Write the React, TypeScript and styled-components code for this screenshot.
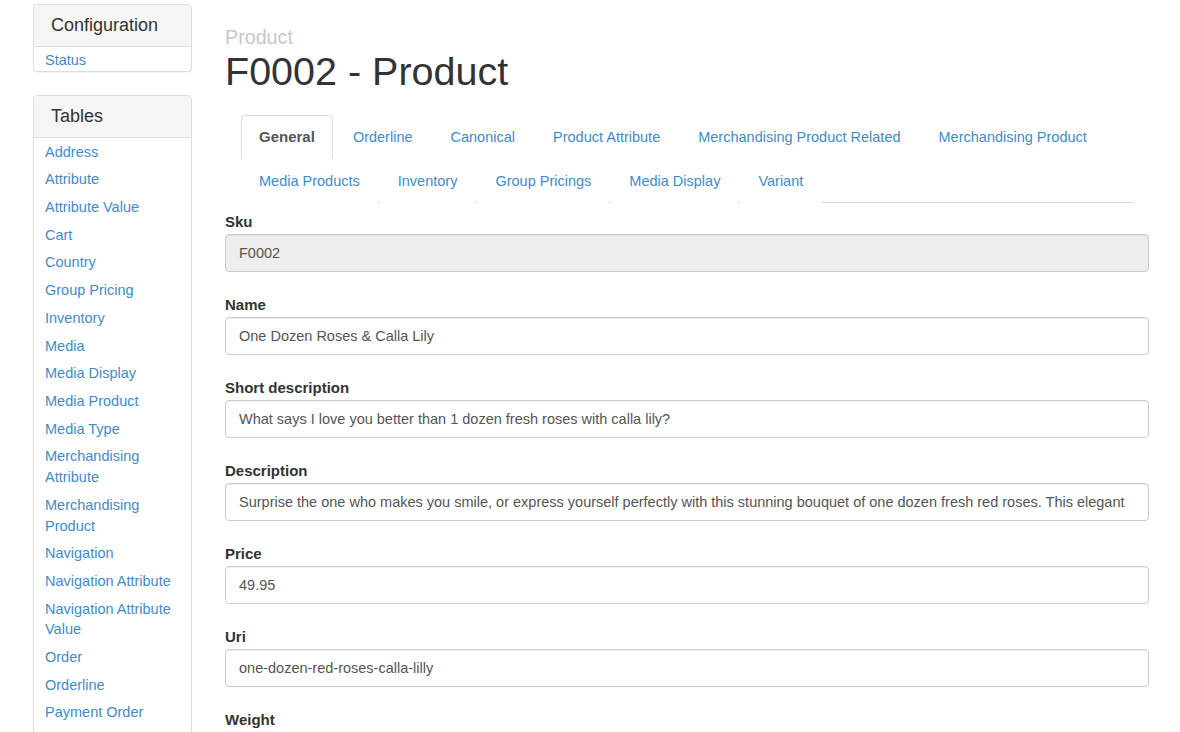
import React from "react";
import styled, { createGlobalStyle } from "styled-components";

const Global = createGlobalStyle`
  html, body { margin: 0; padding: 0; background: #fff; }
  body {
    font-family: "Liberation Sans", Arial, Helvetica, sans-serif;
    font-size: 14.5px;
    line-height: 20.7px;
    color: #333;
  }
  * { box-sizing: border-box; }
`;

const Page = styled.div`
  display: flex;
  align-items: flex-start;
  gap: 33px;
  padding-left: 33px;
  height: 732px;
  overflow: hidden;
`;

const Sidebar = styled.aside`
  width: 159px;
  flex: none;
  min-height: 780px;
  padding-top: 4px;
  display: flex;
  flex-direction: column;
  gap: 23px;
`;

const Panel = styled.div<{ $grow?: boolean }>`
  border: 1px solid #ddd;
  border-radius: 4px;
  background: #fff;
  box-shadow: 0 1px 1px rgba(0, 0, 0, 0.05);
  flex: ${(p) => (p.$grow ? "1 0 auto" : "none")};
`;

const PanelHeading = styled.div`
  background: #f5f5f5;
  border-bottom: 1px solid #ddd;
  border-radius: 3px 3px 0 0;
  padding: 10.6px 17px;
  font-size: 18px;
  line-height: 19.8px;
  color: #333;
`;

const LinkList = styled.ul`
  list-style: none;
  margin: 0 0 -3.5px;
  padding: 0;
`;

const LinkItem = styled.li`
  padding: 3.5px 15px 3.5px 11px;
  line-height: 20.7px;
`;

const Link = styled.a`
  color: #428bca;
  text-decoration: none;
`;

const Main = styled.main`
  width: 924px;
  flex: none;
  padding-top: 26px;
`;

const Kicker = styled.div`
  font-size: 19.7px;
  line-height: 22px;
  color: #c8c8c8;
`;

const Title = styled.h1`
  margin: 2px 0 0;
  font-size: 39.5px;
  line-height: 43.5px;
  font-weight: 400;
  color: #333;
`;

const Tabs = styled.ul`
  list-style: none;
  margin: 21.5px 16px 0;
  padding: 0;
  display: flex;
  flex-wrap: wrap;
  row-gap: 1px;
  border-bottom: 1px solid #ddd;
`;

const Tab = styled.li`
  margin: 0 2px -1px 0;
`;

const TabLink = styled.a<{ $active?: boolean }>`
  display: block;
  height: 44px;
  padding: 11px 17px;
  line-height: 20px;
  border: 1px solid ${(p) => (p.$active ? "#ddd" : "transparent")};
  border-bottom-color: transparent;
  border-radius: 4px 4px 0 0;
  background: #fff;
  color: ${(p) => (p.$active ? "#555" : "#428bca")};
  font-weight: ${(p) => (p.$active ? 700 : 400)};
  font-size: ${(p) => (p.$active ? "15px" : "14.5px")};
  text-decoration: none;
  white-space: nowrap;
`;

const Form = styled.form`
  padding-top: 9px;
  display: flex;
  flex-direction: column;
  gap: 23.3px;
`;

const Group = styled.div`
  display: flex;
  flex-direction: column;
`;

const Label = styled.label`
  font-weight: 700;
  font-size: 15px;
  line-height: 20.7px;
  color: #333;
  margin-bottom: 1px;
`;

const Input = styled.input<{ $readonly?: boolean }>`
  display: block;
  width: 100%;
  height: 38px;
  padding: 0 13px;
  font-family: "Liberation Sans", Arial, Helvetica, sans-serif;
  font-size: 14.5px;
  color: #555;
  background: ${(p) => (p.$readonly ? "#eee" : "#fff")};
  border: 1px solid #ccc;
  border-radius: 4px;
  box-shadow: inset 0 1px 1px rgba(0, 0, 0, 0.075);
  outline: none;
`;

const tables = [
  "Address",
  "Attribute",
  "Attribute Value",
  "Cart",
  "Country",
  "Group Pricing",
  "Inventory",
  "Media",
  "Media Display",
  "Media Product",
  "Media Type",
  "Merchandising Attribute",
  "Merchandising Product",
  "Navigation",
  "Navigation Attribute",
  "Navigation Attribute Value",
  "Order",
  "Orderline",
  "Payment Order",
];

const tabs = [
  "General",
  "Orderline",
  "Canonical",
  "Product Attribute",
  "Merchandising Product Related",
  "Merchandising Product",
  "Media Products",
  "Inventory",
  "Group Pricings",
  "Media Display",
  "Variant",
];

const fields: { label: string; value: string; readonly?: boolean }[] = [
  { label: "Sku", value: "F0002", readonly: true },
  { label: "Name", value: "One Dozen Roses & Calla Lily" },
  {
    label: "Short description",
    value: "What says I love you better than 1 dozen fresh roses with calla lily?",
  },
  {
    label: "Description",
    value:
      "Surprise the one who makes you smile, or express yourself perfectly with this stunning bouquet of one dozen fresh red roses. This elegant",
  },
  { label: "Price", value: "49.95" },
  { label: "Uri", value: "one-dozen-red-roses-calla-lilly" },
  { label: "Weight", value: "1" },
];

export default function App() {
  return (
    <>
      <Global />
      <Page>
        <Sidebar>
          <Panel>
            <PanelHeading>Configuration</PanelHeading>
            <LinkList>
              <LinkItem>
                <Link href="#">Status</Link>
              </LinkItem>
            </LinkList>
          </Panel>
          <Panel $grow>
            <PanelHeading>Tables</PanelHeading>
            <LinkList>
              {tables.map((t) => (
                <LinkItem key={t}>
                  <Link href="#">{t}</Link>
                </LinkItem>
              ))}
            </LinkList>
          </Panel>
        </Sidebar>
        <Main>
          <Kicker>Product</Kicker>
          <Title>F0002 - Product</Title>
          <Tabs>
            {tabs.map((t, i) => (
              <Tab key={t}>
                <TabLink href="#" $active={i === 0}>
                  {t}
                </TabLink>
              </Tab>
            ))}
          </Tabs>
          <Form>
            {fields.map((f) => (
              <Group key={f.label}>
                <Label>{f.label}</Label>
                <Input $readonly={f.readonly} value={f.value} readOnly />
              </Group>
            ))}
          </Form>
        </Main>
      </Page>
    </>
  );
}
